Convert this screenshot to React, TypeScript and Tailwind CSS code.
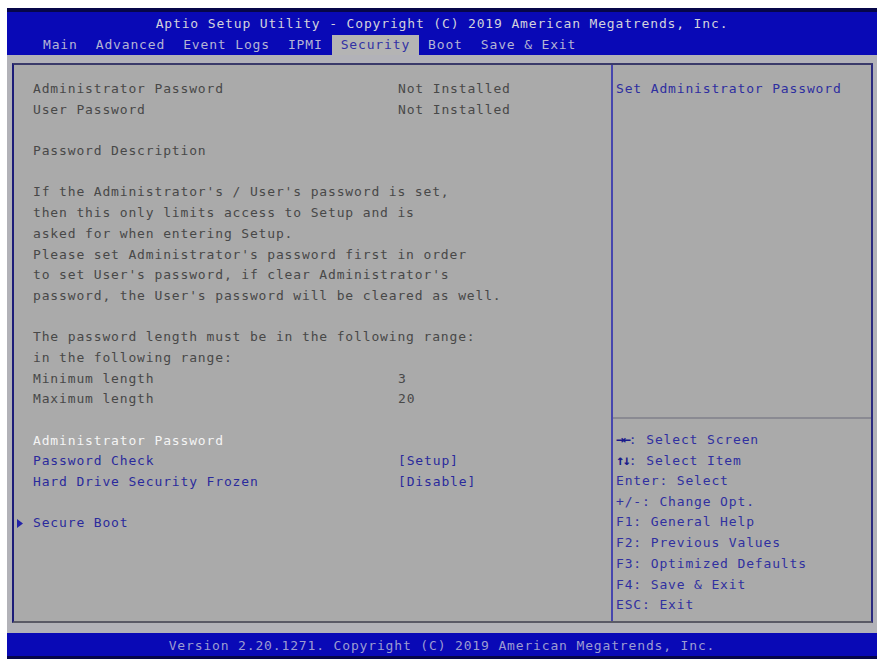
import React from "react";

const mono = "font-['DejaVu_Sans_Mono',monospace] text-[13px] tracking-[0.85px]";

type Row = { label?: string; value?: string; tone?: "gray" | "blue" | "white" };

const rows: Row[] = [
  { label: "Administrator Password", value: "Not Installed" },
  { label: "User Password", value: "Not Installed" },
  {},
  { label: "Password Description" },
  {},
  { label: "If the Administrator's / User's password is set," },
  { label: "then this only limits access to Setup and is" },
  { label: "asked for when entering Setup." },
  { label: "Please set Administrator's password first in order" },
  { label: "to set User's password, if clear Administrator's" },
  { label: "password, the User's password will be cleared as well." },
  {},
  { label: "The password length must be in the following range:" },
  { label: "in the following range:" },
  { label: "Minimum length", value: "3" },
  { label: "Maximum length", value: "20" },
  {},
  { label: "Administrator Password", tone: "white" },
  { label: "Password Check", value: "[Setup]", tone: "blue" },
  { label: "Hard Drive Security Frozen", value: "[Disable]", tone: "blue" },
  {},
];

const tabs = ["Main", "Advanced", "Event Logs", "IPMI", "Security", "Boot", "Save & Exit"];

const help = [
  ["→←", ": Select Screen"],
  ["↑↓", ": Select Item"],
  ["", "Enter: Select"],
  ["", "+/-: Change Opt."],
  ["", "F1: General Help"],
  ["", "F2: Previous Values"],
  ["", "F3: Optimized Defaults"],
  ["", "F4: Save & Exit"],
  ["", "ESC: Exit"],
];

function toneClass(t?: Row["tone"]) {
  if (t === "blue") return "text-[#2a2a9c]";
  if (t === "white") return "text-[#f4f4f4]";
  return "text-[#484848]";
}

export default function App() {
  return (
    <div className={`w-[878px] h-[659px] bg-white pl-[7px] pt-[8px] overflow-hidden ${mono}`}>
      <div className="w-[870px] h-[651px] bg-[#b2b2b8] flex flex-col">
        {/* title + tabs */}
        <div className="h-[47px] bg-[#0909b6] border-t-[4px] border-[#06064a] flex flex-col">
          <div className="h-[23px] leading-[24px] text-center text-[#d2d2dc]">
            Aptio Setup Utility - Copyright (C) 2019 American Megatrends, Inc.
          </div>
          <div className="flex pl-[27px] h-[20px] items-end">
            {tabs.map((t) =>
              t === "Security" ? (
                <span key={t} className="px-[9px] h-[20px] leading-[20px] bg-[#b4b4b4] text-[#3232a4]">
                  {t}
                </span>
              ) : (
                <span key={t} className="px-[9px] h-[20px] leading-[20px] text-[#b4b4d4] whitespace-pre">
                  {t}
                </span>
              )
            )}
          </div>
        </div>

        {/* main panel */}
        <div className="mt-[8px] ml-[5px] w-[861px] h-[560px] bg-[#aaaaaa] border-2 border-t-[#3a3a6a] border-l-[#1c1c78] border-r-[#2a2a80] border-b-[#5a5a66] flex">
          <div className="w-[597px] pl-[19px] pt-[14px] leading-[20.7px]">
            {rows.map((r, i) => (
              <div key={i} className={`flex h-[20.7px] ${toneClass(r.tone)}`}>
                <span className="w-[365px] shrink-0 whitespace-pre">{r.label ?? ""}</span>
                <span className="whitespace-pre">{r.value ?? ""}</span>
              </div>
            ))}
            <div className="flex items-center h-[20.7px] -ml-[17px] text-[#2a2a9c]">
              <span className="w-[17px] flex items-center pl-[1px]">
                <svg width="6" height="9" viewBox="0 0 6 9">
                  <polygon points="0,0 6,4.5 0,9" fill="#2424a8" />
                </svg>
              </span>
              <span>Secure Boot</span>
            </div>
          </div>

          <div className="w-[2px] bg-[#4646ae]" />

          <div className="flex-1 flex flex-col">
            <div className="flex-1 pl-[3px] pt-[14px] leading-[20.7px] text-[#2e2ea0]">
              Set Administrator Password
            </div>
            <div className="h-[2px] bg-[#8a8a92]" />
            <div className="pl-[3px] pt-[10px] pb-[5px] leading-[20.75px] text-[#3030a0]">
              {help.map(([a, b], i) => (
                <div key={i} className="h-[20.75px] whitespace-pre">
                  {a && <span className="text-[#1a1a8a] font-bold text-[14px] tracking-[-2px]">{a}</span>}
                  {b}
                </div>
              ))}
            </div>
          </div>
        </div>

        {/* footer */}
        <div className="mt-[10px] h-[26px] bg-[#0909b6] border-b-[3px] border-[#06064a] text-center leading-[25px] text-[#9c9cd2]">
          Version 2.20.1271. Copyright (C) 2019 American Megatrends, Inc.
        </div>
      </div>
    </div>
  );
}
